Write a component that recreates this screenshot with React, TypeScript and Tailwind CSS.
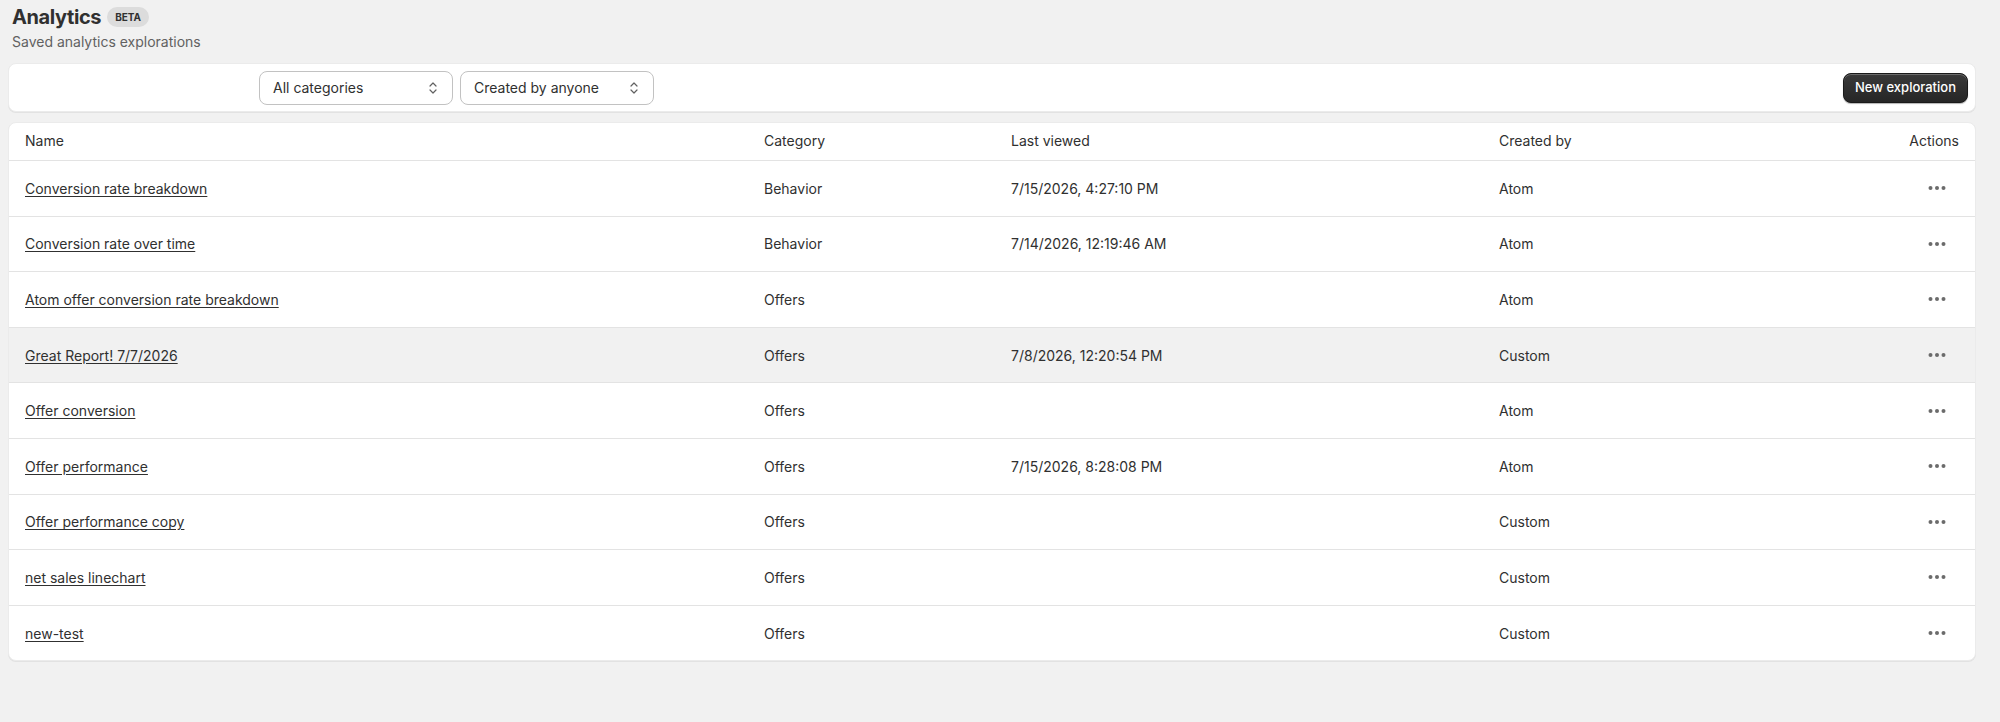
import React from "react"

type Row = {
  name: string
  category: string
  viewed: string
  creator: string
}

const rows: Row[] = [
  { name: "Conversion rate breakdown", category: "Behavior", viewed: "7/15/2026, 4:27:10 PM", creator: "Atom" },
  { name: "Conversion rate over time", category: "Behavior", viewed: "7/14/2026, 12:19:46 AM", creator: "Atom" },
  { name: "Atom offer conversion rate breakdown", category: "Offers", viewed: "", creator: "Atom" },
  { name: "Great Report! 7/7/2026", category: "Offers", viewed: "7/8/2026, 12:20:54 PM", creator: "Custom" },
  { name: "Offer conversion", category: "Offers", viewed: "", creator: "Atom" },
  { name: "Offer performance", category: "Offers", viewed: "7/15/2026, 8:28:08 PM", creator: "Atom" },
  { name: "Offer performance copy", category: "Offers", viewed: "", creator: "Custom" },
  { name: "net sales linechart", category: "Offers", viewed: "", creator: "Custom" },
  { name: "new-test", category: "Offers", viewed: "", creator: "Custom" },
]

function SelectIcon() {
  return (
    <svg width="10" height="14" viewBox="0 0 10 14" fill="none" className="shrink-0">
      <path d="M2 5 L5 2 L8 5" stroke="#616161" strokeWidth="1.2" strokeLinecap="round" strokeLinejoin="round" />
      <path d="M2 9 L5 12 L8 9" stroke="#616161" strokeWidth="1.2" strokeLinecap="round" strokeLinejoin="round" />
    </svg>
  )
}

function Dots() {
  return (
    <svg width="18" height="6" viewBox="0 0 18 6" className="mr-[13px]">
      <circle cx="2.5" cy="3" r="2" fill="#6b6b6b" />
      <circle cx="9" cy="3" r="2" fill="#6b6b6b" />
      <circle cx="15.5" cy="3" r="2" fill="#6b6b6b" />
    </svg>
  )
}

function Select({ label }: { label: string }) {
  return (
    <button className="flex items-center justify-between w-[194px] h-[34px] pl-[13px] pr-[14px] rounded-lg border border-[#c2c2c2] bg-white text-[14px] text-[#303030]">
      <span>{label}</span>
      <SelectIcon />
    </button>
  )
}

const cols = "grid grid-cols-[739px_247px_488px_1fr_auto] items-center px-4"

export default function App() {
  return (
    <div
      className="min-h-[722px] bg-[#f1f1f1] pl-2 pr-6 pt-[5px] text-[#303030]"
      style={{ fontFamily: "Inter, 'Noto Sans', sans-serif" }}
    >
      {/* 제목 */}
      <div className="px-1">
        <div className="flex items-center gap-[6px]">
          <h1 className="text-[20px] leading-6 font-bold tracking-[-0.4px] text-[#303030]">Analytics</h1>
          <span className="h-5 px-2 rounded-full bg-[#dcdcdc] text-[10px] font-bold leading-5 text-[#303030]">BETA</span>
        </div>
        <p className="mt-[3px] text-[14px] leading-5 text-[#616161]">Saved analytics explorations</p>
      </div>

      {/* 필터 */}
      <div className="mt-[11px] h-[49px] flex items-center bg-white rounded-lg border border-[#ebebeb] shadow-[0_1px_0_0_rgba(26,26,26,0.07)] pl-[250px] pr-[7px]">
        <div className="flex items-center gap-[7px]">
          <Select label="All categories" />
          <Select label="Created by anyone" />
        </div>
        <button className="ml-auto h-[30px] px-[11px] rounded-lg bg-[#303030] bg-gradient-to-b from-[#3a3a3a] to-[#262626] border border-[#1a1a1a] text-white text-[13px] font-medium shadow-[inset_0_1px_0_rgba(255,255,255,0.25),0_1px_1px_rgba(0,0,0,0.3)]">
          New exploration
        </button>
      </div>

      {/* 테이블 */}
      <div className="mt-[10px] bg-white rounded-lg border border-[#ebebeb] shadow-[0_1px_0_0_rgba(26,26,26,0.07)] overflow-hidden text-[14px]">
        <div className={`${cols} h-[37px] pb-[2px]`}>
          <div>Name</div>
          <div>Category</div>
          <div>Last viewed</div>
          <div>Created by</div>
          <div className="text-right">Actions</div>
        </div>
        {rows.map((r) => (
          <div
            key={r.name}
            className={`${cols} h-[55.6px] border-t border-[#e3e3e3] ${r.name.startsWith("Great") ? "bg-[#f1f1f1]" : ""}`}
          >
            <div>
              <a href="#" className="underline underline-offset-2 decoration-[#303030]">{r.name}</a>
            </div>
            <div>{r.category}</div>
            <div>{r.viewed}</div>
            <div>{r.creator}</div>
            <div className="flex justify-end">
              <Dots />
            </div>
          </div>
        ))}
      </div>
    </div>
  )
}
